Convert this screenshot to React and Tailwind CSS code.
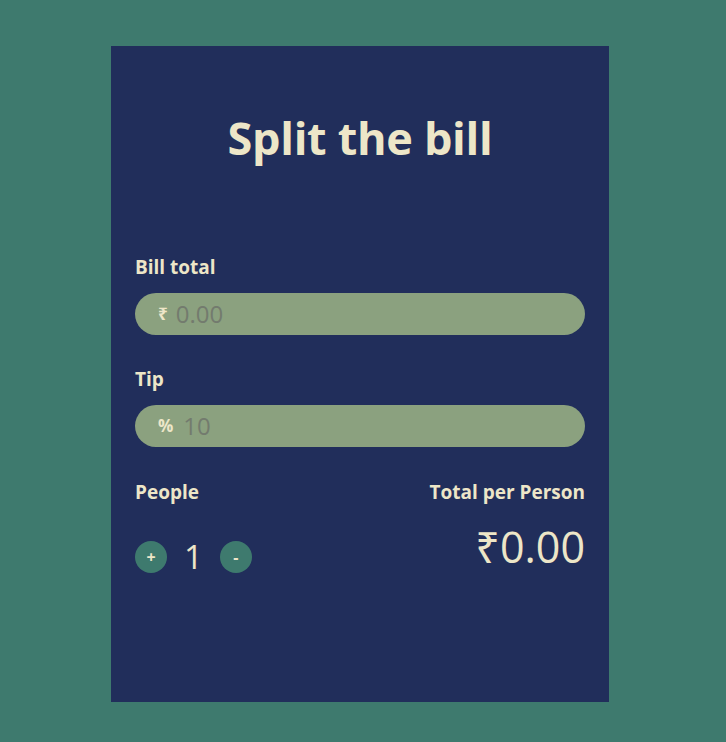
export default function App() {
  return (
    <div className="min-h-[742px] w-full bg-[#3e7a6e] pt-[46px]" style={{ fontFamily: '"Open Sans", "Noto Sans", sans-serif' }}>
      <div className="ml-[111px] flex h-[656px] w-[498px] flex-col bg-[#212e5b] px-6 text-[#ede6c8]">
        <h1 className="mt-[67px] text-center text-[45px] font-bold leading-[50px] tracking-[-0.3px]">Split the bill</h1>
        <div className="mt-[92px] flex flex-col">
          <label className="text-[19px] font-bold leading-[24px]">Bill total</label>
          <div className="mt-[14px] flex h-[42px] items-center rounded-full bg-[#8ba17f] pl-[23px]">
            <span className="text-[17px] font-bold">₹</span>
            <span className="ml-[8px] text-[24px] text-[#737b6e]">0.00</span>
          </div>
          <label className="mt-[32px] text-[19px] font-bold leading-[24px]">Tip</label>
          <div className="mt-[14px] flex h-[42px] items-center rounded-full bg-[#8ba17f] pl-[23px]">
            <span className="text-[17px] font-bold">%</span>
            <span className="ml-[10px] text-[24px] text-[#737b6e]">10</span>
          </div>
          <div className="mt-[33px] flex justify-between">
            <div className="flex flex-col">
              <span className="text-[19px] font-bold leading-[24px]">People</span>
              <div className="mt-[37px] flex items-center">
                <div className="flex h-[32px] w-[32px] items-center justify-center rounded-full bg-[#3e7a6e] text-[16px] font-bold">+</div>
                <span className="mx-[17px] text-[33px] leading-[32px]">1</span>
                <div className="flex h-[32px] w-[32px] items-center justify-center rounded-full bg-[#3e7a6e] text-[16px] font-bold">-</div>
              </div>
            </div>
            <div className="flex flex-col items-end">
              <span className="text-[19px] font-bold leading-[24px]">Total per Person</span>
              <span className="mt-[18px] text-[43px] leading-[50px]">₹0.00</span>
            </div>
          </div>
        </div>
      </div>
    </div>
  );
}
